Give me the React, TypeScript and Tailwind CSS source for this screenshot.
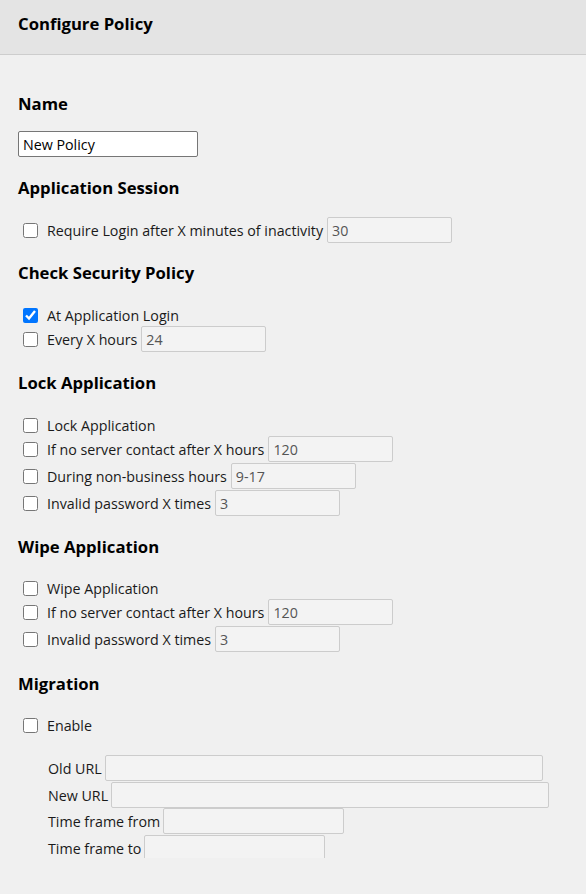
import React from "react";

const font = { fontFamily: '"Open Sans", "Noto Sans", sans-serif' };

function Heading({ children, className = "" }: { children: React.ReactNode; className?: string }) {
  return <div className={`h-[24px] leading-[24px] text-[16.7px] font-bold text-black ${className}`}>{children}</div>;
}

function Check({
  label,
  value,
  checked = false,
  className = "",
}: {
  label: string;
  value?: string;
  checked?: boolean;
  className?: string;
}) {
  return (
    <div className={`flex items-center ${value !== undefined ? "h-[26px]" : "h-[22px]"} ${className}`}>
      <input
        type="checkbox"
        defaultChecked={checked}
        className="m-0 ml-[5px] w-[15px] h-[15px] accent-[#0075ff]"
      />
      <span className="ml-[9px] pt-px text-[14.25px] text-[#1a1a1a] whitespace-nowrap">{label}</span>
      {value !== undefined && (
        <input
          type="text"
          disabled
          defaultValue={value}
          className="ml-[4px] w-[125px] h-[26px] px-[4px] bg-[#f3f3f3] border border-[#cccccc] rounded-[2px] text-[14.25px] text-[#555555]"
        />
      )}
    </div>
  );
}

function Field({ label, width, className = "" }: { label: string; width: string; className?: string }) {
  return (
    <div className={`flex items-center h-[26px] ml-[30px] ${className}`}>
      <span className="pt-px text-[14.25px] text-[#1a1a1a] whitespace-nowrap">{label}</span>
      <input
        type="text"
        disabled
        className={`ml-[3px] h-[26px] bg-[#f3f3f3] border border-[#cccccc] rounded-[2px] ${width}`}
      />
    </div>
  );
}

export default function App() {
  return (
    <div className="w-[586px] h-[894px] bg-[#f0f0f0] flex flex-col overflow-hidden" style={font}>
      <div className="h-[55px] shrink-0 bg-[#e4e4e4] border-b border-[#cdcdcd] px-[18px] pb-[6px] flex items-center">
        <span className="text-[16.7px] font-bold text-black">Configure Policy</span>
      </div>

      <div className="h-[803px] shrink-0 overflow-hidden px-[18px]">
        <Heading className="mt-[37px]">Name</Heading>
        <input
          type="text"
          defaultValue="New Policy"
          className="mt-[15px] w-[180px] h-[26px] px-[4px] bg-white border border-[#767676] rounded-[2px] text-[14.25px] text-black outline-none"
        />

        <Heading className="mt-[19px]">Application Session</Heading>
        <Check className="mt-[17px]" label="Require Login after X minutes of inactivity" value="30" />

        <Heading className="mt-[18px]">Check Security Policy</Heading>
        <Check className="mt-[19px]" label="At Application Login" checked />
        <Check label="Every X hours" value="24" />

        <Heading className="mt-[19px]">Lock Application</Heading>
        <Check className="mt-[19px]" label="Lock Application" />
        <Check label="If no server contact after X hours" value="120" />
        <Check className="mt-px" label="During non-business hours" value="9-17" />
        <Check className="mt-px" label="Invalid password X times" value="3" />

        <Heading className="mt-[19px]">Wipe Application</Heading>
        <Check className="mt-[18px]" label="Wipe Application" />
        <Check label="If no server contact after X hours" value="120" />
        <Check className="mt-px" label="Invalid password X times" value="3" />

        <Heading className="mt-[20px]">Migration</Heading>
        <Check className="mt-[18px]" label="Enable" />

        <Field className="mt-[19px]" label="Old URL" width="w-[438px]" />
        <Field className="mt-px" label="New URL" width="w-[438px]" />
        <Field label="Time frame from" width="w-[181px]" />
        <Field className="mt-px" label="Time frame to" width="w-[181px]" />
      </div>
    </div>
  );
}
